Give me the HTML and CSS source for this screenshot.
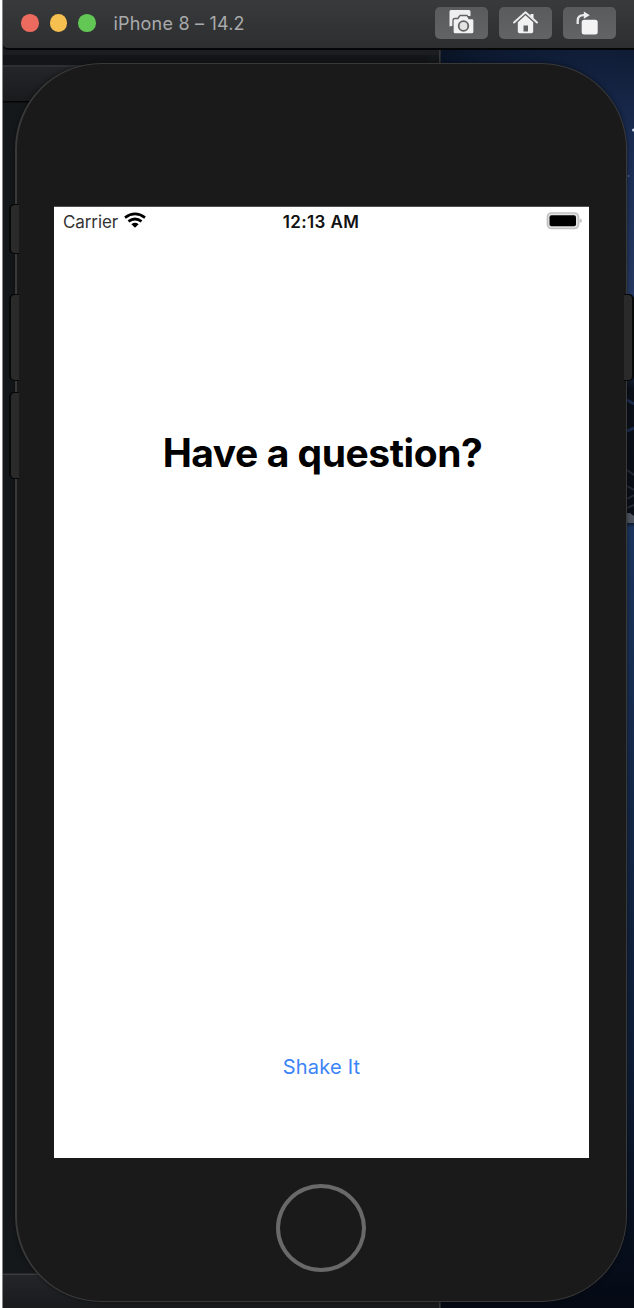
FILE: index.html
```html
<!DOCTYPE html>
<html lang="en">
<head>
<meta charset="utf-8">
<title>iPhone 8 – 14.2</title>
<link rel="stylesheet" href="styles.css">
</head>
<body>
<div class="desktop">
  <svg class="backdrop" width="634" height="1308" viewBox="0 0 634 1308" aria-hidden="true">
    <defs>
      <linearGradient id="wall" x1="0" y1="0" x2="0" y2="1">
        <stop offset="0" stop-color="#101c34"/>
        <stop offset=".07" stop-color="#1a2c52"/>
        <stop offset=".2" stop-color="#263a63"/>
        <stop offset=".255" stop-color="#1c2b4b"/>
        <stop offset=".27" stop-color="#0b1019"/>
        <stop offset=".375" stop-color="#0a0e16"/>
        <stop offset=".38" stop-color="#1c355e"/>
        <stop offset=".6" stop-color="#142848"/>
        <stop offset=".8" stop-color="#0e1d36"/>
        <stop offset="1" stop-color="#050a14"/>
      </linearGradient>
      <linearGradient id="sky" x1="0" y1="0" x2="1" y2="0">
        <stop offset="0" stop-color="#071121" stop-opacity=".8"/>
        <stop offset="1" stop-color="#12264c" stop-opacity="0"/>
      </linearGradient>
      <linearGradient id="panel" x1="0" y1="0" x2="0" y2="1">
        <stop offset="0" stop-color="#232528"/>
        <stop offset="1" stop-color="#191b1d"/>
      </linearGradient>
    </defs>
    <rect width="634" height="1308" fill="#15181a"/>
    <rect x="441" y="49" width="193" height="1259" fill="url(#wall)"/>
    <rect x="441" y="49" width="193" height="110" fill="url(#sky)"/>
    <path d="M627 400l7 4M627 431l7-3" stroke="#1b2b4c" stroke-width="3"/>
    <path d="M627 470l7 5M627 486l7 4M627 499l7-4M627 508l7-3" stroke="#242a35" stroke-width="2"/>
    <path d="M627 513h3l4 3v7h-7z" fill="#4f5661"/>
    <circle cx="633.5" cy="130" r="1.5" fill="#c6d2e7"/>
    <circle cx="628.5" cy="176" r="1" fill="#53668d"/>
    <rect x="3" y="49" width="438" height="6" fill="#1c1d20"/>
    <rect x="3" y="55" width="425" height="11" fill="#141518"/>
    <rect x="3" y="65" width="425" height="2" fill="#2d2f32"/>
    <rect x="3" y="67" width="80" height="34" fill="url(#panel)"/>
    <rect x="3" y="101" width="80" height="1.5" fill="#050506"/>
    <rect x="439" y="49" width="1.5" height="20" fill="#36383a"/>
    <rect x="3" y="1274" width="437" height="34" fill="url(#panel)"/>
    <rect x="3" y="1273.500" width="80" height="1.500" fill="#3b3d3f"/>
    <rect x="439" y="1296" width="1.500" height="12" fill="#37393b"/>
    <rect width="2.500" height="1308" fill="#fff"/>
    <rect x="2" width="1" height="1308" fill="#85888a"/>
  </svg>

  <header class="titlebar">
    <div class="lights">
      <span class="light close"></span>
      <span class="light minimise"></span>
      <span class="light zoom"></span>
    </div>
    <h1 class="title">iPhone 8 – 14.2</h1>
    <div class="tools">
      <button class="tool" aria-label="Screenshot">
        <svg width="53" height="32" viewBox="0 0 53 32">
          <path d="M14.500 19.500V4.500Q14.500 3 16 3h18q1.500 0 1.500 1.500V9H24l-2 2.500h-3.500v7z" fill="#eeeeef"/>
          <path d="M20 11.500h3l2-3h7l2 3H37q2 0 2 2V25q0 2-2 2H20q-2 0-2-2V13.500q0-2 2-2z" fill="#f1f1f2" stroke="#606163" stroke-width="1.300"/>
          <circle cx="28.500" cy="19" r="4.800" fill="#e4e4e5" stroke="#626365" stroke-width="1.800"/>
        </svg>
      </button>
      <button class="tool" aria-label="Home">
        <svg width="53" height="32" viewBox="0 0 53 32">
          <path d="M31.500 7h3v6l-3-3z" fill="#f1f1f2"/>
          <path d="M15 15.500 26.500 5.300 38 15.500" fill="none" stroke="#ececed" stroke-width="1.900" stroke-linecap="round" stroke-linejoin="round"/>
          <path fill-rule="evenodd" d="m26.500 8.300 7.700 7V24.500q0 1.800-1.800 1.800H20.600q-1.800 0-1.800-1.800v-9.200zM24.500 18.500v6h4.500v-6z" fill="#f1f1f2"/>
        </svg>
      </button>
      <button class="tool" aria-label="Rotate">
        <svg width="53" height="32" viewBox="0 0 53 32">
          <rect x="18.700" y="12.700" width="16" height="14.700" rx="2.500" fill="#f3f3f4"/>
          <path d="M14.700 17v-3.200q0-5.600 6-5.600h1" fill="none" stroke="#e8e8e9" stroke-width="2.300"/>
          <path d="m20.800 4.500 6 3.700-6 3.500z" fill="#eeeeef"/>
        </svg>
      </button>
    </div>
  </header>

  <main class="stage">
    <div class="phone">
      <span class="key mute"></span>
      <span class="key volume-up"></span>
      <span class="key volume-down"></span>
      <span class="key power"></span>
      <section class="screen">
        <div class="status">
          <div class="network">
            <span class="carrier">Carrier</span>
            <svg class="wifi" width="22" height="17" viewBox="0 0 22 17">
              <g fill="none" stroke="#000" stroke-width="2.700">
                <path d="M1 5.600q10-7.400 20 0"/>
                <path d="M4.500 9.400q6.500-4.800 13 0"/>
              </g>
              <path d="M7.400 12.200q3.600-2.800 7.200 0L11 15.800z"/>
            </svg>
          </div>
          <time class="clock">12:13 AM</time>
          <svg class="battery" width="36" height="18" viewBox="0 0 36 18">
            <rect x="1.500" y="1" width="31" height="15.500" rx="4" fill="#e5e5e5" stroke="#c2c2c2" stroke-width="1.700"/>
            <rect x="3.500" y="3.300" width="26.500" height="11" rx="2" fill="#000"/>
            <path d="M33.600 6.500q2.300.6 2.300 2.300t-2.300 2.300z" fill="#c2c2c2"/>
          </svg>
        </div>
        <h2 class="question">Have a question?</h2>
        <button class="shake">Shake It</button>
      </section>
      <div class="home"></div>
    </div>
  </main>
</div>
</body>
</html>
```
FILE: styles.css
```css
* { box-sizing: border-box; }
body {
  margin: 0;
  font-family: Inter, Roboto, "Liberation Sans", sans-serif;
  background: #15181a;
}
.desktop {
  position: relative;
  width: 634px;
  height: 1308px;
  overflow: hidden;
}
.backdrop { position: absolute; inset: 0; }
button { border: 0; padding: 0; margin: 0; font-family: inherit; }
.titlebar {
  position: relative;
  display: flex;
  align-items: center;
  height: 50px;
  margin-left: 3px;
  padding: 0 18px 2px;
  border-bottom: 2px solid #050607;
  border-radius: 0 0 0 5px;
  background: linear-gradient(#393a3c, #2d2e30);
}
.lights { display: flex; gap: 11px; }
.light { width: 17.5px; height: 17.5px; border-radius: 50%; }
.close { background: #ed6a5e; }
.minimise { background: #f5c04f; }
.zoom { background: #62c755; }
.title {
  margin: 2px auto 0 18px;
  color: #a9aaab;
  font-size: 18px;
  font-weight: 400;
  line-height: 24px;
  letter-spacing: .2px;
  white-space: nowrap;
}
.tools { display: flex; gap: 11px; }
.tool {
  width: 53px;
  height: 32px;
  border-radius: 5px;
  background: linear-gradient(#5a5b5d, #626365);
}
.tool svg { display: block; }
.stage { padding: 13px 0 0 15px; }
.phone {
  position: relative;
  display: flex;
  flex-direction: column;
  align-items: center;
  width: 612px;
  height: 1239px;
  padding-top: 142px;
  border: 1px solid #39393a;
  border-left-width: 2px;
  border-radius: 86px;
  background: #1a1a1a;
  box-shadow: 0 0 5px #0007;
}
.key {
  position: absolute;
  left: -6px;
  width: 8px;
  border-radius: 4px 0 0 4px;
  background: #2a2a2b;
  box-shadow: -1px 0 0 1px #070808;
  clip-path: inset(-3px 0 -3px -4px);
}
.mute { top: 141px; height: 48px; }
.volume-up { top: 231px; height: 85px; }
.volume-down { top: 329px; height: 85px; }
.power {
  left: auto;
  right: -6px;
  top: 231px;
  height: 85px;
  border-radius: 0 4px 4px 0;
  box-shadow: 1px 0 0 1px #070808;
  clip-path: inset(-3px -4px -3px 0);
}
.screen {
  display: flex;
  flex-direction: column;
  align-items: center;
  width: 535px;
  height: 952px;
  flex: none;
  background: #fff;
  border-top: 1px solid #505050;
}
.status {
  display: grid;
  grid-template-columns: 1fr auto 1fr;
  align-items: center;
  width: 100%;
  height: 30px;
  padding: 0 7px 0 9px;
}
.network { display: flex; align-items: center; gap: 6px; }
.carrier { font-size: 17px; line-height: 24px; letter-spacing: -.1px; color: #333; }
.wifi { margin-top: -3px; }
.clock {
  margin-right: 3px;
  font-size: 17px;
  font-weight: 600;
  line-height: 24px;
  letter-spacing: .35px;
  color: #111;
}
.battery { justify-self: end; margin-top: -2px; }
.question {
  margin: 188px 0 0 2px;
  font-size: 39px;
  font-weight: 700;
  line-height: 56px;
  letter-spacing: -.45px;
  white-space: nowrap;
}
.shake {
  margin: auto 0 75px;
  background: none;
  color: #3a84f7;
  font-size: 20px;
  line-height: 32px;
  letter-spacing: .2px;
}
.home {
  width: 90px;
  height: 88px;
  margin: 26px 2px 0 0;
  border: 4px solid #696969;
  border-radius: 50%;
}
```
